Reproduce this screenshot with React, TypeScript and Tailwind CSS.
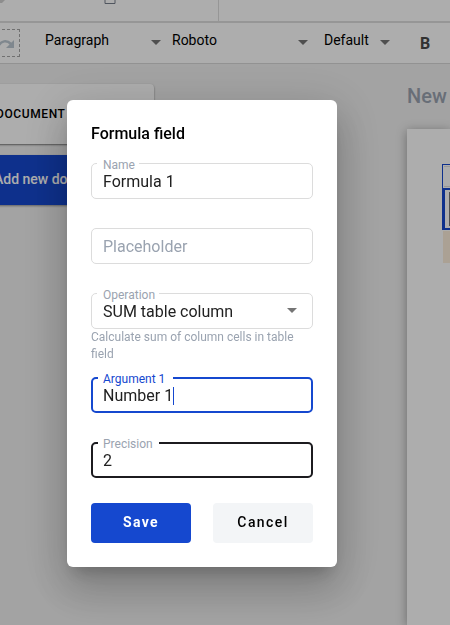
import { useState } from "react";
import type { ReactNode } from "react";

function Arrow({ className = "" }: { className?: string }) {
  return (
    <svg viewBox="0 0 10 5" className={`h-[5px] w-[10px] fill-[#757575] ${className}`} aria-hidden="true">
      <path d="M0 0h10L5 5z" />
    </svg>
  );
}

function ToolbarSelect({ label, value, className }: { label: string; value: string; className: string }) {
  return (
    <div className={`flex shrink-0 items-center ${className}`}>
      <select aria-label={label} className="h-6 min-w-0 flex-1 appearance-none bg-transparent text-sm text-black outline-none">
        <option>{value}</option>
      </select>
      <Arrow className="mt-1" />
    </div>
  );
}

const outlines = {
  idle: "border border-[#dcdcdc] px-[11px]",
  focus: "border-2 border-[#1548cf] px-[10px]",
  strong: "border-2 border-[#1c1b1f] px-[10px]",
};

const labels = {
  idle: "-top-[7px] pr-1 pl-1.5 text-[#9aa3b0]",
  focus: "-top-2 pr-2 pl-[5px] text-[#1548cf]",
  strong: "-top-2 pr-1.5 pl-[5px] text-[#9aa3b0]",
};

function Field({
  id,
  label,
  outline = "idle",
  children,
}: {
  id: string;
  label?: string;
  outline?: keyof typeof outlines;
  children: ReactNode;
}) {
  return (
    <div className={`relative flex h-9 items-center rounded-[5px] ${outlines[outline]}`}>
      {label && (
        <label htmlFor={id} className={`absolute left-[5px] bg-white text-xs leading-4 ${labels[outline]}`}>
          {label}
        </label>
      )}
      {children}
    </div>
  );
}

const control =
  "h-7 w-full min-w-0 bg-transparent text-base leading-6 text-[#212121] outline-none placeholder:text-[#9aa3b0]";

function FormulaDialog() {
  const [name, setName] = useState("Formula 1");
  const [placeholder, setPlaceholder] = useState("");
  const [argument, setArgument] = useState("Number 1");
  const [precision, setPrecision] = useState("2");

  return (
    <div className="fixed inset-0 bg-black/32 pt-[100px] pl-[67px]">
      <form
        role="dialog"
        aria-labelledby="dialog-title"
        onSubmit={(e) => e.preventDefault()}
        className="w-[270px] rounded-md bg-white p-6 shadow-[0_11px_15px_-7px_rgba(0,0,0,0.2),0_24px_38px_3px_rgba(0,0,0,0.14),0_9px_46px_8px_rgba(0,0,0,0.12)]"
      >
        <h2 id="dialog-title" className="mb-[19px] text-base leading-5 font-medium text-black">
          Formula field
        </h2>
        <div className="flex flex-col gap-[29px]">
          <Field id="name" label="Name">
            <input id="name" className={`${control} pt-px`} value={name} onChange={(e) => setName(e.target.value)} />
          </Field>
          <Field id="placeholder">
            <input
              id="placeholder"
              aria-label="Placeholder"
              placeholder="Placeholder"
              className={`${control} pt-px`}
              value={placeholder}
              onChange={(e) => setPlaceholder(e.target.value)}
            />
          </Field>
          <div className="-mb-[15px]">
            <Field id="operation" label="Operation">
              <select id="operation" className={`${control} appearance-none pt-0.5`}>
                <option>SUM table column</option>
              </select>
              <Arrow className="mr-1 mb-0.5 shrink-0" />
            </Field>
            <p className="text-xs leading-[17px] text-[#9aa3b0]">Calculate sum of column cells in table field</p>
          </div>
          <Field id="argument" label="Argument 1" outline="focus">
            <input
              id="argument"
              className={`${control} pt-px caret-[#1548cf]`}
              value={argument}
              onChange={(e) => setArgument(e.target.value)}
            />
            <span className="absolute top-2 left-20 h-[18px] w-px bg-[#1548cf]" />
          </Field>
          <Field id="precision" label="Precision" outline="strong">
            <input
              id="precision"
              className={`${control} pt-px`}
              value={precision}
              onChange={(e) => setPrecision(e.target.value)}
            />
          </Field>
        </div>
        <div className="mt-[25px] flex justify-between text-sm tracking-widest">
          <button type="submit" className="h-10 w-[100px] rounded bg-[#1548cf] pb-0.5 font-bold text-white">
            Save
          </button>
          <button type="button" className="h-10 w-[100px] rounded bg-[#f3f5f7] pb-0.5 font-medium text-black">
            Cancel
          </button>
        </div>
      </form>
    </div>
  );
}

export default function App() {
  return (
    <div className="flex min-h-screen flex-col overflow-hidden bg-[#f0f0f0] font-[Roboto,sans-serif]">
      <header className="flex h-[23px] border-b-2 border-[#dedede] bg-white">
        <div className="flex w-[219px] items-start border-r border-[#dedede]">
          <svg viewBox="0 0 120 5" className="h-[5px] w-[120px]" aria-hidden="true">
            <path d="M0 0h5L2 3H0z" fill="#d0d0d0" />
            <path d="M105 -6V3.500H115V-6" fill="none" stroke="#777f8c" />
          </svg>
        </div>
      </header>
      <div className="flex h-[41px] items-center border-b border-[#d8d8d8] bg-white">
        <button
          aria-label="Redo"
          className="-ml-2 flex h-7 w-7 shrink-0 items-center justify-center border border-dashed border-[#a5a5a5]"
        >
          <svg viewBox="0 0 18 10" className="mt-0.5 h-[10px] w-[18px]" aria-hidden="true">
            <path d="M1 8C4 1 10 1 14 5" fill="none" stroke="#bcc8d1" strokeWidth="2.500" />
            <path d="M17 1v8H9z" fill="#bcc8d1" />
          </svg>
        </button>
        <div className="flex items-center pb-1.5 pl-[25px]">
          <ToolbarSelect label="Block style" value="Paragraph" className="w-[116px]" />
          <ToolbarSelect label="Font" value="Roboto" className="ml-[11px] w-[136px]" />
          <ToolbarSelect label="Font size" value="Default" className="ml-4 w-[66px]" />
        </div>
        <button aria-label="Bold" className="ml-[30px] pt-0.5 text-base font-bold text-[#4a4a4a]">
          B
        </button>
      </div>
      <main className="flex flex-1 justify-between">
        <aside className="-ml-6 w-[178px] shrink-0 pt-5">
          <div className="flex h-[60px] items-center rounded bg-white pl-5 text-xs font-medium tracking-wider text-black shadow-[0_1px_2px_rgba(0,0,0,0.5)]">
            DOCUMENT
          </div>
          <button className="mt-[11px] flex h-[50px] w-full items-center bg-[#1548cf] pb-0.5 pl-[18px] text-sm font-medium text-white shadow-[0_1px_2px_rgba(0,0,0,0.4)]">
            Add new do
          </button>
        </aside>
        <section className="flex w-[43px] shrink-0 flex-col">
          <h1 className="mt-5 mb-[21px] text-xl leading-6 font-medium text-[#9aa3b0]">New</h1>
          <div className="flex-1 bg-white pt-[35px] pl-[35px] shadow-[0_2px_10px_rgba(0,0,0,0.35)]">
            <div className="h-6 border-t border-l border-[#1548cf] p-px pr-0">
              <div className="h-full border-y border-[#dedede]" />
            </div>
            <div className="flex h-[42px] justify-end border-y-2 border-l-[3px] border-[#1548cf] py-0.5">
              <div className="w-px bg-[#777]" />
            </div>
            <div className="mt-px ml-px h-8 bg-[#fdeeda]" />
          </div>
        </section>
      </main>
      <FormulaDialog />
    </div>
  );
}
